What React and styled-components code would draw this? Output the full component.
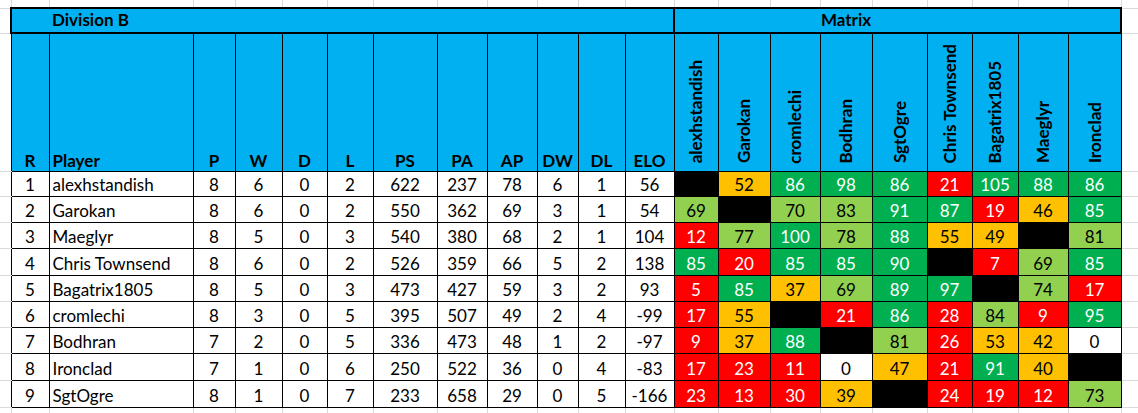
import React from 'react'
import styled, { createGlobalStyle, css } from 'styled-components'

const GlobalStyle = createGlobalStyle`
  html, body {
    margin: 0;
    background: #fff;
  }
  body {
    font-family: Lato, 'Liberation Sans', sans-serif;
    color: #000;
  }
`

const GRID = '#dadada'
const BLUE = '#00b0f0'

const tones = {
  K: { bg: '#000', fg: '#000' },
  O: { bg: '#ffc000', fg: '#000' },
  L: { bg: '#92d050', fg: '#000' },
  G: { bg: '#00b050', fg: '#fff' },
  R: { bg: '#ff0000', fg: '#fff' },
  W: { bg: '#fff', fg: '#000' }
}

const widths = [38, 144, 42, 47, 45, 46, 64, 50, 50, 41, 47, 49, 44, 52, 50, 52, 55, 45, 46, 50, 53]

const stats = ['P', 'W', 'D', 'L', 'PS', 'PA', 'AP', 'DW', 'DL', 'ELO']

const opponents = ['alexhstandish', 'Garokan', 'cromlechi', 'Bodhran', 'SgtOgre', 'Chris Townsend', 'Bagatrix1805', 'Maeglyr', 'Ironclad']

const players = [
  { name: 'alexhstandish', s: [8, 6, 0, 2, 622, 237, 78, 6, 1, 56], m: ['K', 'O52', 'G86', 'G98', 'G86', 'R21', 'G105', 'G88', 'G86'] },
  { name: 'Garokan', s: [8, 6, 0, 2, 550, 362, 69, 3, 1, 54], m: ['L69', 'K', 'L70', 'L83', 'G91', 'G87', 'R19', 'O46', 'G85'] },
  { name: 'Maeglyr', s: [8, 5, 0, 3, 540, 380, 68, 2, 1, 104], m: ['R12', 'L77', 'G100', 'L78', 'G88', 'O55', 'O49', 'K', 'L81'] },
  { name: 'Chris Townsend', s: [8, 6, 0, 2, 526, 359, 66, 5, 2, 138], m: ['G85', 'R20', 'G85', 'G85', 'G90', 'K', 'R7', 'L69', 'G85'] },
  { name: 'Bagatrix1805', s: [8, 5, 0, 3, 473, 427, 59, 3, 2, 93], m: ['R5', 'G85', 'O37', 'L69', 'G89', 'G97', 'K', 'L74', 'R17'] },
  { name: 'cromlechi', s: [8, 3, 0, 5, 395, 507, 49, 2, 4, -99], m: ['R17', 'O55', 'K', 'R21', 'G86', 'R28', 'L84', 'R9', 'G95'] },
  { name: 'Bodhran', s: [7, 2, 0, 5, 336, 473, 48, 1, 2, -97], m: ['R9', 'O37', 'G88', 'K', 'L81', 'R26', 'O53', 'O42', 'W0'] },
  { name: 'Ironclad', s: [7, 1, 0, 6, 250, 522, 36, 0, 4, -83], m: ['R17', 'R23', 'R11', 'W0', 'O47', 'R21', 'G91', 'O40', 'K'] },
  { name: 'SgtOgre', s: [8, 1, 0, 7, 233, 658, 29, 0, 5, -166], m: ['R23', 'R13', 'R30', 'O39', 'K', 'R24', 'R19', 'R12', 'L73'] }
]

const Sheet = styled.table`
  border-collapse: collapse;
  table-layout: fixed;
  width: 1138px;
  font-size: 17px;
  line-height: 20px;
`

const Row = styled.tr`
  height: ${p => p.$h}px;
`

// excel gridlines around the table
const Gutter = styled.td`
  padding: 0;
  border: 1px solid ${GRID};
  ${p => p.$side === 'top' && css`border-top: none;`}
  ${p => p.$side === 'bottom' && css`border-bottom: none;`}
  ${p => p.$side === 'left' && css`border-left: none; border-right: none;`}
  ${p => p.$side === 'right' && css`border-right: none;`}
`

const Corner = styled.td`
  padding: 0;
  border: none;
`

const Title = styled.td`
  background: ${BLUE};
  border: 2px solid #000;
  font-weight: 700;
  text-align: ${p => p.$align || 'left'};
  vertical-align: bottom;
  padding: 0 ${p => p.$pr || 0}px 2px ${p => p.$pl || 0}px;
`

const Head = styled.td`
  background: ${BLUE};
  border: 1px solid #000;
  font-weight: 700;
  text-align: ${p => p.$align || 'center'};
  vertical-align: bottom;
  padding: 0 0 ${p => (p.$rotated ? 3 : 0)}px ${p => (p.$align === 'left' ? 3 : 0)}px;
  white-space: nowrap;
`

const Vertical = styled.span`
  display: inline-block;
  writing-mode: vertical-rl;
  transform: rotate(180deg);
  white-space: nowrap;
  line-height: 20px;
`

const Cell = styled.td`
  border: 1px solid #000;
  text-align: ${p => p.$align || 'center'};
  vertical-align: bottom;
  padding: 0 0 1px ${p => (p.$align === 'left' ? 3 : 0)}px;
  white-space: nowrap;
  overflow: hidden;
`

const Score = styled(Cell)`
  background: ${p => tones[p.$tone].bg};
  color: ${p => tones[p.$tone].fg};
`

const rowHeights = [25, 26, 26, 27, 26, 26, 26, 27, 27]

export default function App() {
  return (
    <>
      <GlobalStyle />
      <Sheet>
        <colgroup>
          <col style={{ width: 11 }} />
          {widths.map((w, i) => <col key={i} style={{ width: w }} />)}
          <col style={{ width: 17 }} />
        </colgroup>
        <tbody>
          <Row $h={8}>
            <Corner />
            {widths.map((_, i) => <Gutter key={i} $side='top' />)}
            <Corner />
          </Row>
          <Row $h={25}>
            <Gutter $side='left' />
            <Title colSpan={12} $pl={40}>Division B</Title>
            <Title colSpan={9} $align='center' $pr={103}>Matrix</Title>
            <Gutter $side='right' />
          </Row>
          <Row $h={138}>
            <Gutter $side='left' />
            <Head>R</Head>
            <Head $align='left'>Player</Head>
            {stats.map(s => <Head key={s}>{s}</Head>)}
            {opponents.map(o => (
              <Head key={o} $rotated><Vertical>{o}</Vertical></Head>
            ))}
            <Gutter $side='right' />
          </Row>
          {players.map((p, r) => (
            <Row key={p.name} $h={rowHeights[r]}>
              <Gutter $side='left' />
              <Cell>{r + 1}</Cell>
              <Cell $align='left'>{p.name}</Cell>
              {p.s.map((v, i) => <Cell key={i}>{v}</Cell>)}
              {p.m.map((v, i) => (
                <Score key={i} $tone={v[0]}>{v.slice(1)}</Score>
              ))}
              <Gutter $side='right' />
            </Row>
          ))}
          <Row $h={7}>
            <Corner />
            {widths.map((_, i) => <Gutter key={i} $side='bottom' />)}
            <Corner />
          </Row>
        </tbody>
      </Sheet>
    </>
  )
}
